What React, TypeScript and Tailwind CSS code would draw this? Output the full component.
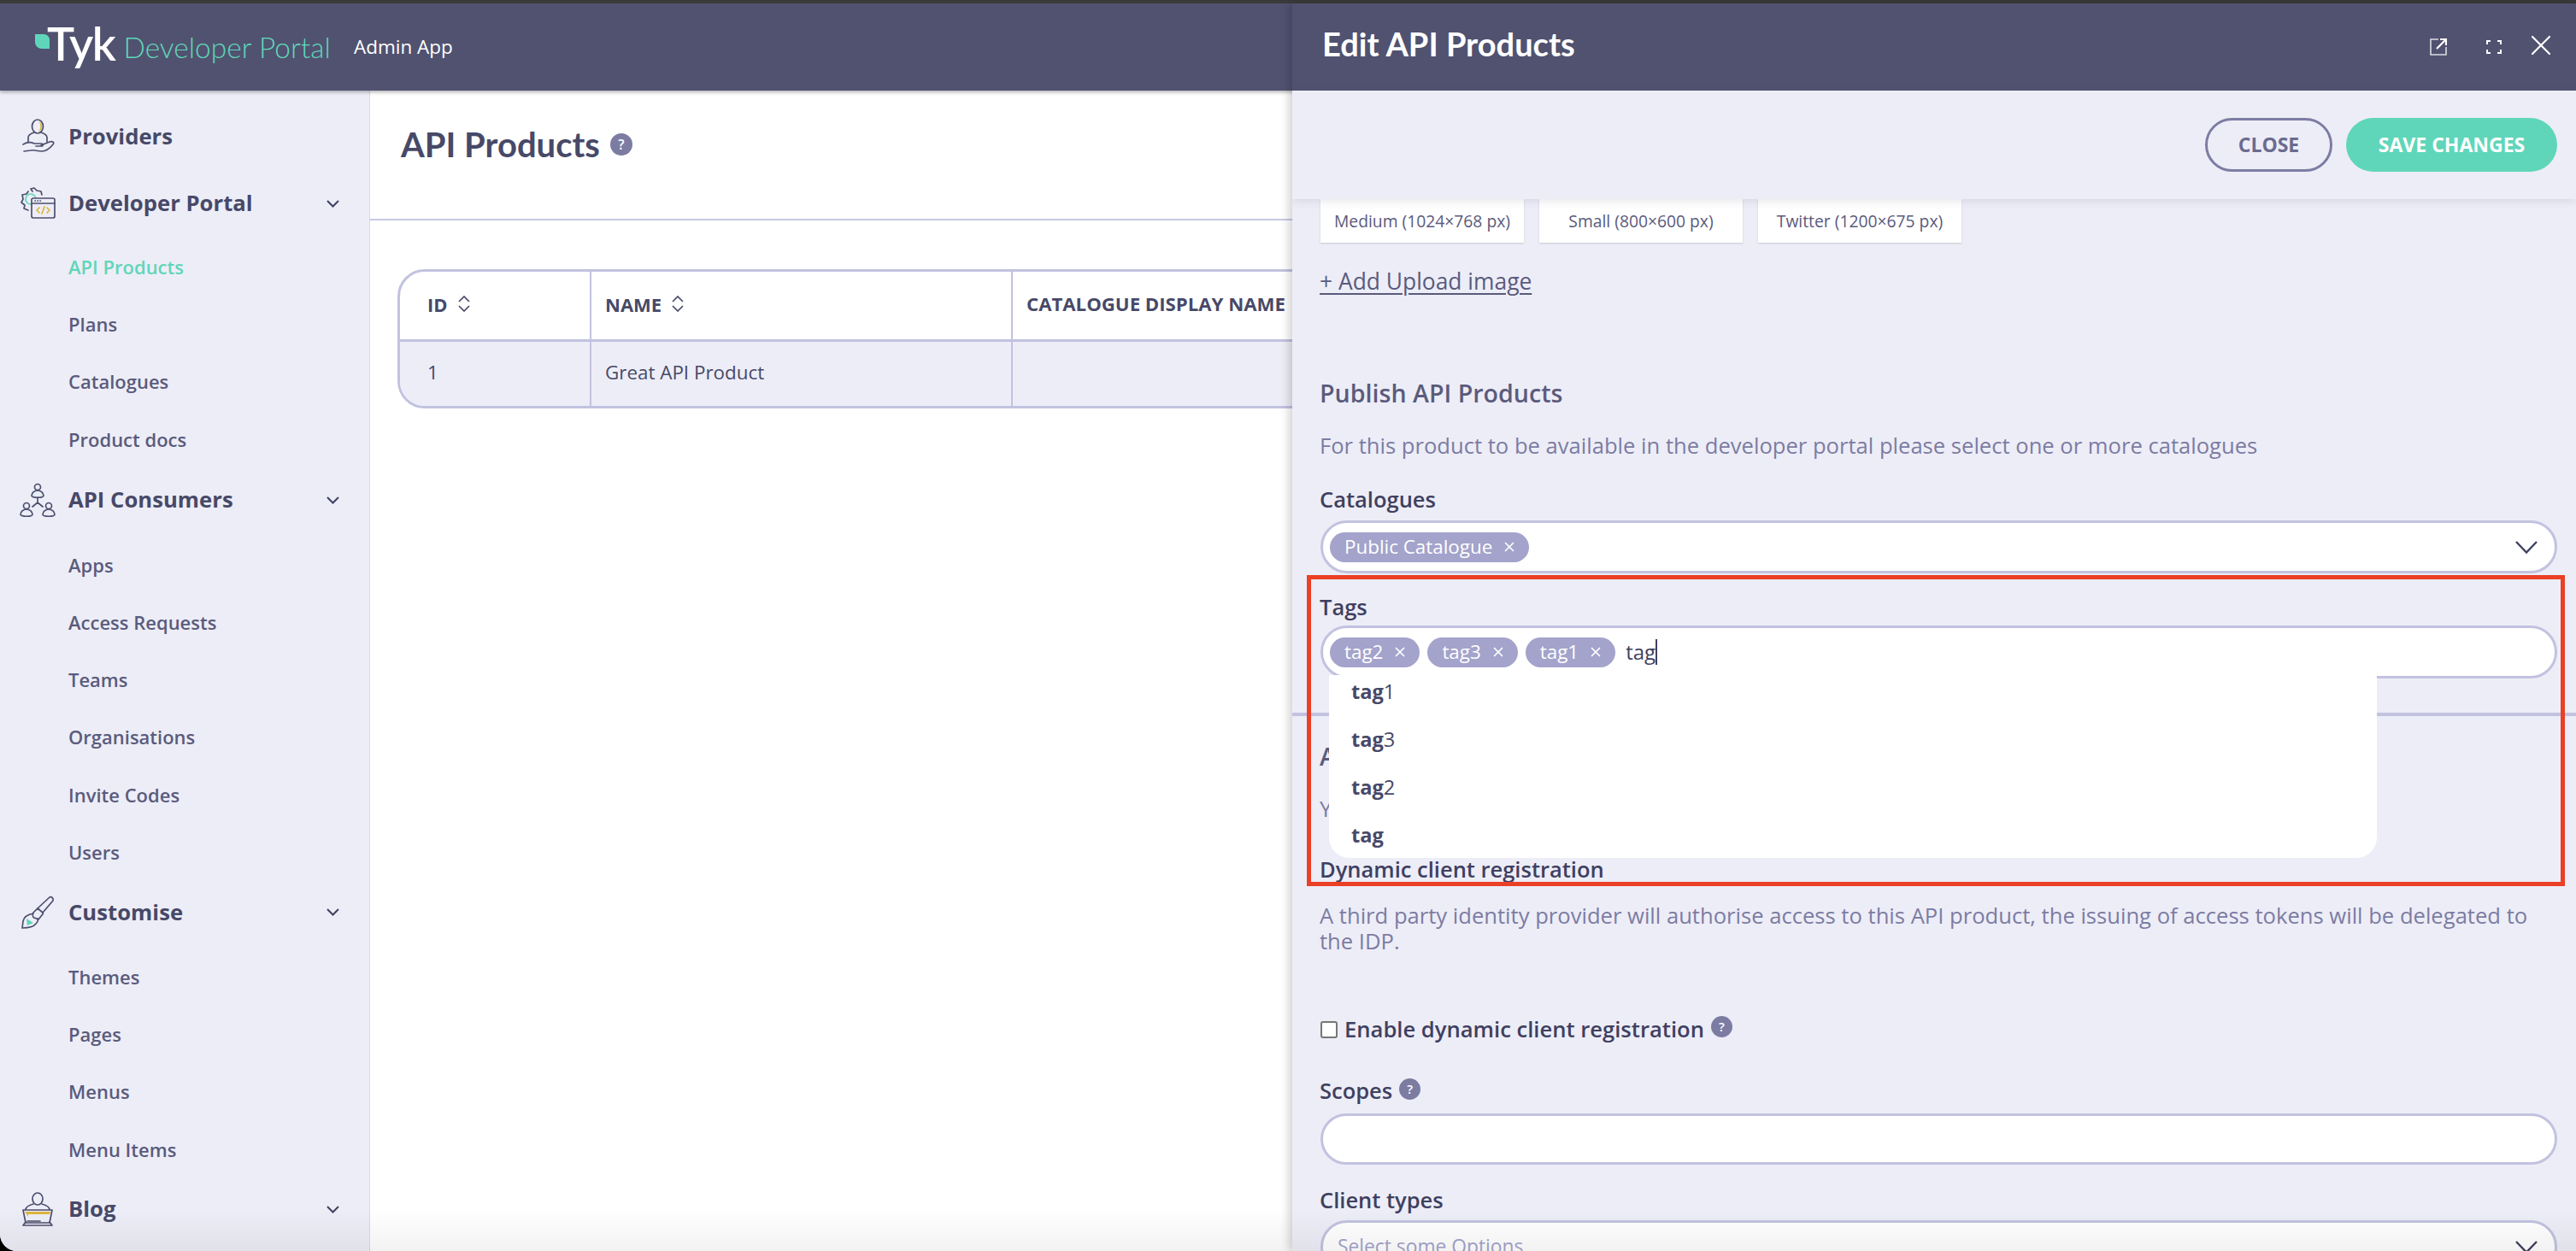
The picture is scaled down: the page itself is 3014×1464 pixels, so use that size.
import React from 'react';
import { X } from 'lucide-react';

const stroke = '#4d4e6e';

const ProvidersIcon = () => (
  <svg width="44" height="44" viewBox="0 0 44 44" fill="none" stroke={stroke} strokeWidth="1.7" strokeLinecap="round" strokeLinejoin="round">
    <ellipse cx="22" cy="10" rx="6.5" ry="8" />
    <path d="M23 4c3 2 3 9 0 12 3-1 4-3 4-6s-1-5-4-6z" fill="#dcb53c" stroke="none" />
    <path d="M11 28v-5c0-4 4-5 7-6M33 28v-5c0-4-4-5-7-6" />
    <path d="M5 31c5-3 9-3 13-1h8c3 0 3 3 0 3h-6M26 32l10-4c4-1 6 1 4 3-4 5-9 8-13 8-6 0-9-2-13-1l-8 1" />
  </svg>
);

const DevPortalIcon = () => (
  <svg width="44" height="44" viewBox="0 0 44 44" fill="none" stroke={stroke} strokeWidth="1.7" strokeLinecap="round" strokeLinejoin="round">
    <circle cx="14" cy="17" r="6" stroke="#5fd6b9" />
    <path d="M16 8l-2-3 4-1 3 3 5 1 1 4M11 30l-5-2 1-4-4-3 2-4-1-5 5-1 2-3" />
    <rect x="15" y="16" width="27" height="23" rx="2" fill="#ededf7" />
    <path d="M15 22h27" />
    <path d="M19 19h.4M22 19h.4M25 19h.4" />
    <path d="M24 27l-3 3 3 3M33 27l3 3-3 3M30 26l-3 8" stroke="#dcb53c" />
  </svg>
);

const ConsumersIcon = () => (
  <svg width="44" height="44" viewBox="0 0 44 44" fill="none" stroke={stroke} strokeWidth="1.7" strokeLinecap="round" strokeLinejoin="round">
    <circle cx="22" cy="6" r="3.5" />
    <path d="M15 16c0-3 3-6 7-6s7 3 7 6-14 3-14 0z" />
    <path d="M16 14c4 3 8 3 12 0-1 3-11 3-12 0z" fill="#5fd6b9" stroke="none" />
    <path d="M22 18v6M22 24l-6 5M22 24l6 5" />
    <circle cx="9" cy="28" r="3.5" />
    <path d="M2 38c0-3 3-6 7-6s7 3 7 6-14 3-14 0z" />
    <circle cx="35" cy="28" r="3.5" />
    <path d="M28 38c0-3 3-6 7-6s7 3 7 6-14 3-14 0z" />
  </svg>
);

const BrushIcon = () => (
  <svg width="44" height="44" viewBox="0 0 44 44" fill="none" stroke={stroke} strokeWidth="1.7" strokeLinecap="round" strokeLinejoin="round">
    <path d="M22 17L36 4c2-1 5 1 4 4L28 22" />
    <path d="M17 22l5-5 6 5c1 1 0 2-1 3l-4 5-5-2c-2-1-2-4-1-6z" />
    <path d="M17 23c-6 1-11 4-12 9l-1 8c7 0 13-1 16-5 2-2 3-4 2-6" />
    <path d="M9 29l8 5-7 3z" fill="#5fd6b9" stroke="none" />
  </svg>
);

const BlogIcon = () => (
  <svg width="44" height="44" viewBox="0 0 44 44" fill="none" stroke={stroke} strokeWidth="1.7" strokeLinecap="round" strokeLinejoin="round">
    <ellipse cx="22" cy="9" rx="6" ry="7" />
    <path d="M8 22c0-4 5-6 9-7M36 22c0-4-5-6-9-7" />
    <path d="M5 22h34l-3 15H8z" fill="#ededf7" />
    <path d="M7 24h30l-1 3H11v3l-2-3z" fill="#dcb53c" stroke="none" />
    <path d="M10 35h15M8 36l-3 4h34l-3-4" />
  </svg>
);

const Chevron = ({ w = 15, h = 9, width = 2 }: { w?: number; h?: number; width?: number }) => (
  <svg width={w} height={h} viewBox={`0 0 ${w} ${h}`} fill="none" stroke="#3f4060" strokeWidth={width} className="shrink-0">
    <path d={`M1 1L${w / 2} ${h - 1.5}L${w - 1} 1`} />
  </svg>
);

const SortIcon = () => (
  <svg width="14" height="19" viewBox="0 0 14 19" fill="none" stroke="#474968" strokeWidth="1.7" className="shrink-0 -mt-[2px]">
    <path d="M1 7l6-6 6 6M1 12l6 6 6-6" />
  </svg>
);

type NavSection = {
  label: string;
  icon: React.ReactNode;
  items: string[];
  gap: string;
};

const sections: NavSection[] = [
  { label: 'Providers', icon: <ProvidersIcon />, items: [], gap: 'mb-[6px]' },
  { label: 'Developer Portal', icon: <DevPortalIcon />, items: ['API Products', 'Plans', 'Catalogues', 'Product docs'], gap: 'mb-[2px]' },
  { label: 'API Consumers', icon: <ConsumersIcon />, items: ['Apps', 'Access Requests', 'Teams', 'Organisations', 'Invite Codes', 'Users'], gap: 'mb-[1px]' },
  { label: 'Customise', icon: <BrushIcon />, items: ['Themes', 'Pages', 'Menus', 'Menu Items'], gap: 'mb-[1px]' },
  { label: 'Blog', icon: <BlogIcon />, items: [], gap: '' },
];

const Help = ({ size = 'w-[25px] h-[25px] text-[15px]' }: { size?: string }) => (
  <span className={`${size} shrink-0 rounded-full bg-[#7c7ca3] text-white flex items-center justify-center font-semibold`}>?</span>
);

const Sidebar = () => (
  <aside className="w-[433px] shrink-0 bg-[#ededf7] border-r border-[#d9d9e3] pt-[18px] shadow-[1px_0_3px_rgba(0,0,0,0.12)]">
    {sections.map((s, i) => (
      <div key={s.label} className={s.gap}>
        <div className="h-[72px] flex items-center pl-[22px] pr-[35px] text-[#474968]">
          <span className="w-[58px] shrink-0">{s.icon}</span>
          <span className="flex-1 text-[25.7px] font-bold">{s.label}</span>
          {i > 0 && <Chevron />}
        </div>
        {s.items.length > 0 && (
          <ul className={i === 1 ? 'mt-[5px]' : 'mt-[6px]'}>
            {s.items.map((item) => (
              <li
                key={item}
                className={`h-[67.2px] flex items-center pl-[80px] text-[22px] font-semibold ${
                  item === 'API Products' ? 'text-[#5fd6b9]' : 'text-[#5a5b7c]'
                }`}
              >
                {item}
              </li>
            ))}
          </ul>
        )}
      </div>
    ))}
  </aside>
);

const SortHead = ({ label }: { label: string }) => (
  <span className="flex items-center gap-[12px] text-[22px] font-bold text-[#474968]">
    {label}
    <SortIcon />
  </span>
);

const ProductsPage = () => (
  <main className="flex-1 bg-white">
    <div className="h-[152px] border-b-2 border-[#c8c8e4] pl-[36px] pt-[38px]">
      <div className="flex items-center gap-[12px] h-[50px]">
        <h1 className="font-['Lato',sans-serif] text-[40px] font-bold text-[#474968]">API Products</h1>
        <Help size="w-[26px] h-[26px] text-[16px]" />
      </div>
    </div>
    <div className="mt-[57px] ml-[32px] mr-[34px] rounded-[32px] border-[3px] border-[#c2c2e0] overflow-hidden">
      <div className="flex h-[82px] border-b-[3px] border-[#c2c2e0]">
        <div className="w-[224px] flex items-center pl-[32px] pb-[3px] border-r-2 border-[#c2c2e0]"><SortHead label="ID" /></div>
        <div className="w-[493px] flex items-center pl-[16px] pb-[3px] border-r-2 border-[#c2c2e0]"><SortHead label="NAME" /></div>
        <div className="flex-1 flex items-center pl-[16px] pb-[3px] text-[22.2px] font-bold text-[#474968]">CATALOGUE DISPLAY NAME</div>
      </div>
      <div className="flex h-[75px] bg-[#ededf7] text-[22.4px] text-[#474968]">
        <div className="w-[224px] flex items-center pl-[32px] pb-[3px] border-r-2 border-[#c2c2e0]">1</div>
        <div className="w-[493px] flex items-center pl-[16px] pb-[3px] border-r-2 border-[#c2c2e0]">Great API Product</div>
        <div className="flex-1" />
      </div>
    </div>
  </main>
);

const Chip = ({ label }: { label: string }) => (
  <span className="h-[35px] pl-[17px] pr-[14px] rounded-full bg-[#a3a3cb] text-white text-[22.4px] flex items-center gap-[11px] shrink-0">
    {label}
    <X size={18} strokeWidth={2.2} />
  </span>
);

const Label = ({ children, className = '' }: { children: React.ReactNode; className?: string }) => (
  <div className={`h-[30px] flex items-center text-[25.5px] font-semibold text-[#3f4060] ${className}`}>{children}</div>
);

const fieldClass = 'h-[62px] rounded-full border-[3px] border-[#c2c2e0] bg-white flex items-center pl-[8px]';

const EditPanel = () => (
  <section className="absolute z-[2] top-[4px] bottom-0 left-[1512px] right-0 bg-[#ededf7] flex flex-col overflow-hidden shadow-[-4px_0_10px_rgba(0,0,0,0.18)]">
    <header className="h-[102px] shrink-0 bg-[#515270] flex items-center pl-[35px] pr-[21px] text-white">
      <h2 className="flex-1 font-['Lato',sans-serif] text-[38px] font-bold -mt-[8px]">Edit API Products</h2>
      <div className="flex items-center">
        <svg width="20" height="20" viewBox="0 0 20 20" fill="none" stroke="currentColor" strokeWidth="1.6" className="mr-[46px]">
          <path d="M10 1H1v18h18v-9" strokeOpacity="0.8" />
          <path d="M8 12L19 1M12 1h7v7" strokeWidth="2.2" />
        </svg>
        <svg width="18" height="16" viewBox="0 0 18 16" fill="none" stroke="currentColor" strokeWidth="2" className="mr-[26px]">
          <path d="M1 5V1h4M13 1h4v4M17 11v4h-4M5 15H1v-4" />
        </svg>
        <X size={40} strokeWidth={1.3} className="-mt-[4px]" />
      </div>
    </header>

    <div className="h-[127px] shrink-0 relative z-10 bg-[#ededf7] shadow-[0_2px_10px_rgba(80,80,120,0.15)] flex items-center justify-end gap-[16px] pr-[22px]">
      <button className="h-[63px] w-[149px] rounded-full border-[3px] border-[#7c7ca3] text-[#6a6b90] text-[23px] font-bold">CLOSE</button>
      <button className="h-[63px] w-[247px] rounded-full bg-[#5fd6b9] text-white text-[23px] font-bold">SAVE CHANGES</button>
    </div>

    <div className="flex-1 pl-[33px] pr-[22px] text-[#474968]">
      <div className="flex gap-[18px]">
        {['Medium (1024×768 px)', 'Small (800×600 px)', 'Twitter (1200×675 px)'].map((t) => (
          <div key={t} className="w-[238px] h-[51px] pt-[1px] bg-white shadow-[0_1px_2px_rgba(0,0,0,0.15)] flex items-center justify-center text-[19.3px] text-[#5a5b7c]">
            {t}
          </div>
        ))}
      </div>

      <div className="mt-[26px] h-[40px] flex items-center text-[26.4px] font-medium text-[#5a5b7c] underline underline-offset-4 -ml-[1px]">+ Add Upload image</div>

      <div className="mt-[90px] h-[40px] flex items-center text-[28.6px] font-semibold text-[#5a5b7c] -ml-[1px]">Publish API Products</div>
      <p className="mt-[27px] h-[30px] leading-[30px] text-[25.6px] text-[#7c7ca3] -ml-[1px]">For this product to be available in the developer portal please select one or more catalogues</p>

      <Label className="mt-[32px] -ml-[1px]">Catalogues</Label>
      <div className={`mt-[10px] ${fieldClass} justify-between pr-[20px]`}>
        <Chip label="Public Catalogue" />
        <Chevron w={26} h={15} width={2.4} />
      </div>

      <Label className="mt-[24px] -ml-[1px]">Tags</Label>
      <div className="relative mt-[7px]">
        <div className={`${fieldClass} gap-[9px]`}>
          <Chip label="tag2" />
          <Chip label="tag3" />
          <Chip label="tag1" />
          <span className="ml-[3px] text-[24px] text-[#3f4060] border-r-2 border-[#3f4060] leading-[30px]">tag</span>
        </div>
        <ul className="absolute z-20 left-[10px] top-[58px] w-[1226px] h-[214px] bg-white rounded-b-[24px] text-[23.6px] text-[#474968]">
          {['1', '3', '2', ''].map((n) => (
            <li key={n} className="h-[56px] flex items-center pl-[26px] first:mt-[-8px]">
              <b className="font-bold">tag</b>
              {n}
            </li>
          ))}
        </ul>
      </div>

      <div className="mt-[40px] -ml-[33px] -mr-[22px] h-[4px] bg-[#c2c2e0]" />
      <div className="mt-[27px] h-[40px] flex items-center text-[28.6px] font-semibold text-[#5a5b7c] -ml-[1px]">A</div>
      <p className="mt-[27px] h-[30px] leading-[30px] text-[25.6px] text-[#7c7ca3] -ml-[1px]">Y</p>

      <Label className="mt-[40px] -ml-[1px]">Dynamic client registration</Label>
      <p className="mt-[25px] leading-[30px] text-[25.6px] text-[#7c7ca3] w-[1430px] -ml-[1px]">
        A third party identity provider will authorise access to this API product, the issuing of access tokens will be delegated to the IDP.
      </p>

      <div className="mt-[73px] flex items-center gap-[8px] h-[30px]">
        <input type="checkbox" className="w-[20px] h-[20px] appearance-none bg-white border-2 border-[#767676] rounded-[3px]" readOnly />
        <span className="text-[25.6px] font-semibold text-[#3f4060]">Enable dynamic client registration</span>
        <span className="-mt-[8px]"><Help /></span>
      </div>

      <Label className="mt-[41px] gap-[8px] -ml-[1px]">
        Scopes
        <span className="-mt-[4px]"><Help /></span>
      </Label>
      <div className="mt-[12px] h-[60px] rounded-full border-[3px] border-[#c2c2e0] bg-white" />

      <Label className="mt-[26px] -ml-[1px]">Client types</Label>
      <div className={`mt-[9px] ${fieldClass} justify-between pl-[17px] pr-[20px]`}>
        <span className="text-[22.8px] text-[#a3a3cb]">Select some Options</span>
        <Chevron w={26} h={15} width={2.4} />
      </div>
    </div>
  </section>
);

export default function App() {
  return (
    <div className="relative w-full h-screen overflow-hidden bg-black font-['Open_Sans',sans-serif]">
      <div className="h-full flex flex-col overflow-hidden rounded-bl-[20px] border-t-[4px] border-[#3a3a3a] bg-white">
        <div className="h-[102px] shrink-0 bg-[#515270] flex items-center pl-[41px] shadow-[0_2px_4px_rgba(0,0,0,0.3)] relative z-[1]">
          <svg width="17" height="17" viewBox="0 0 17 17" className="shrink-0 mb-[14px]">
            <path d="M0 0h10c4 0 7 3 7 7v10H8c-5 0-8-4-8-8z" fill="#5fd6b9" />
          </svg>
          <span className="font-['Lato',sans-serif] text-[54px] leading-none font-semibold text-white tracking-[-1.5px] -ml-[3px] mb-[8px]">Tyk</span>
          <span className="ml-[10px] font-['Lato',sans-serif] text-[33.5px] font-light text-[#5fd6b9]">Developer Portal</span>
          <span className="ml-[27px] text-[22.5px] text-white">Admin App</span>
        </div>
        <div className="flex-1 flex min-h-0">
          <Sidebar />
          <ProductsPage />
        </div>
      </div>
      <EditPanel />
      {/* red annotation over the tags field */}
      <div className="absolute z-30 left-[1529px] top-[673px] w-[1472px] h-[364px] border-[5px] border-[#ea4025] pointer-events-none" />
      <div className="absolute z-30 bottom-0 left-0 right-0 h-[50px] bg-gradient-to-t from-black/5 to-transparent pointer-events-none" />
    </div>
  );
}
